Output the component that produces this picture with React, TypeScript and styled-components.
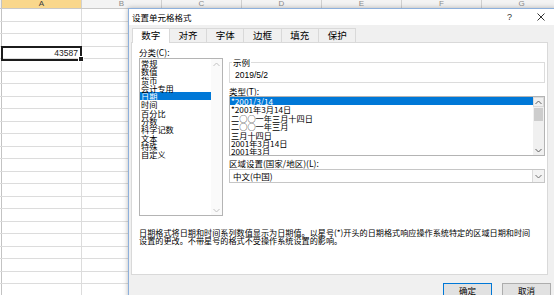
import React from "react";
import styled, { createGlobalStyle, css } from "styled-components";

const GlobalStyle = createGlobalStyle`
  html, body {
    margin: 0;
    padding: 0;
    width: 554px;
    height: 295px;
    overflow: hidden;
    background: #fff;
  }
  body {
    font-family: "Liberation Sans", Arial, sans-serif;
  }
  * { box-sizing: border-box; }
`;

const CJK = `"Noto Sans CJK SC", "Noto Sans", sans-serif`;

const columns = ["A", "B", "C", "D", "E", "F", "G"];
const categories = ["常规", "数值", "货币", "会计专用", "日期", "时间", "百分比", "分数", "科学记数", "文本", "特殊", "自定义"];
const dateTypes = ["*2001/3/14", "*2001年3月14日", "二○○一年三月十四日", "二○○一年三月", "三月十四日", "2001年3月14日", "2001年3月"];
const tabs = ["数字", "对齐", "字体", "边框", "填充", "保护"];

/* ---------- spreadsheet behind the dialog ---------- */

const Sheet = styled.div`
  position: relative;
  width: 554px;
  height: 295px;
  overflow: hidden;
  background: #fff;
`;

const HeaderRow = styled.div`
  display: flex;
  height: 9px;
  border-bottom: 1px solid #c8c8c8;
  background: #f3f3f3;
`;

const RowStub = styled.div`
  flex: none;
  width: 2px;
  border-right: 1px solid #c3c3c3;
`;

const ColHead = styled.div<{ $active?: boolean }>`
  flex: none;
  width: 80px;
  border-right: 1px solid #d0d0d0;
  background: ${(p) => (p.$active ? "#f9d78c" : "transparent")};
  color: ${(p) => (p.$active ? "#3c3c3c" : "#8c8c8c")};
  font-size: 8px;
  line-height: 8px;
  text-align: center;
`;

const Row = styled.div`
  display: flex;
  height: 12.5px;
  border-bottom: 1px solid #dcdcdc;
`;

const Cell = styled.div<{ $selected?: boolean }>`
  position: relative;
  flex: none;
  width: 80px;
  border-right: 1px solid #dcdcdc;
  display: flex;
  align-items: flex-end;
  justify-content: flex-end;
  padding: 0 3px 0 0;
  font-size: 8.5px;
  line-height: 10px;
  color: #222;
  ${(p) =>
    p.$selected &&
    css`
      &::after {
        content: "";
        position: absolute;
        left: -1px;
        top: -1px;
        right: -1px;
        bottom: -2.5px;
        border: 2px solid #1c1c1c;
      }
      &::before {
        content: "";
        position: absolute;
        right: -3px;
        bottom: -4px;
        width: 4px;
        height: 4px;
        background: #1c1c1c;
        border: 1px solid #fff;
        z-index: 1;
      }
    `}
`;

/* ---------- dialog ---------- */

const Dialog = styled.div`
  position: absolute;
  left: 128px;
  top: 8px;
  width: 429px;
  height: 300px;
  border: 1px solid #8db0dc;
  background: #f0f0f0;
  box-shadow: 0 0 5px rgba(0, 0, 0, 0.28);
  display: flex;
  flex-direction: column;
  font-family: ${CJK};
  color: #000;
`;

const TitleBar = styled.div`
  display: flex;
  align-items: center;
  height: 16px;
  background: #fff;
`;

const Title = styled.div`
  padding-left: 3px;
  font-size: 8.5px;
  line-height: 16px;
`;

const TitleButton = styled.div<{ $first?: boolean }>`
  width: 31px;
  height: 16px;
  display: flex;
  align-items: center;
  justify-content: center;
  margin-left: ${(p) => (p.$first ? "auto" : "0")};
  font-family: "Liberation Sans", Arial, sans-serif;
  font-size: 9px;
  color: #333;
`;

const Body = styled.div`
  flex: 1;
  display: flex;
  flex-direction: column;
  padding-top: 3px;
`;

const TabStrip = styled.div`
  display: flex;
  height: 14px;
  padding-left: 2.5px;
  position: relative;
  z-index: 1;
`;

const Tab = styled.div<{ $active?: boolean }>`
  width: 38.3px;
  height: ${(p) => (p.$active ? "15px" : "14px")};
  margin-left: -1px;
  border: 1px solid #d9d9d9;
  border-bottom: none;
  background: ${(p) => (p.$active ? "#fff" : "#f0f0f0")};
  font-size: 9.5px;
  line-height: 13px;
  text-align: center;
  &:first-child {
    margin-left: 0;
  }
`;

const Panel = styled.div`
  margin: 0 8px 0 2px;
  height: 233px;
  border: 1px solid #d9d9d9;
  background: #fff;
  padding: 4.5px 2px 0 7px;
  display: grid;
  grid-template-columns: 84px 316px;
  grid-template-rows: auto auto;
  column-gap: 6px;
  align-content: start;
  font-size: 8.5px;
`;

const Column = styled.div<{ $offset?: number }>`
  display: flex;
  flex-direction: column;
  margin-top: ${(p) => p.$offset ?? 0}px;
`;

const Label = styled.div<{ $gap?: number }>`
  line-height: 9px;
  height: 9px;
  margin-top: ${(p) => p.$gap ?? 0}px;
  white-space: nowrap;
`;

const ListBox = styled.div<{ $height: number; $gap?: number }>`
  display: flex;
  height: ${(p) => p.$height}px;
  margin-top: ${(p) => p.$gap ?? 0}px;
  border: 1px solid #b4b4b4;
  background: #fff;
`;

const Items = styled.div`
  flex: 1;
  overflow: hidden;
  font-size: 8.2px;
`;

const Item = styled.div<{ $selected?: boolean; $h: number }>`
  height: ${(p) => p.$h}px;
  line-height: ${(p) => p.$h}px;
  padding-left: 1px;
  white-space: nowrap;
  background: ${(p) => (p.$selected ? "#0078d7" : "transparent")};
  color: ${(p) => (p.$selected ? "#fff" : "#000")};
`;

const ScrollBar = styled.div<{ $track: string }>`
  flex: none;
  width: 11px;
  display: flex;
  flex-direction: column;
  background: ${(p) => p.$track};
`;

const ScrollButton = styled.div<{ $boxed?: boolean }>`
  height: 10px;
  display: flex;
  align-items: center;
  justify-content: center;
  border: 1px solid ${(p) => (p.$boxed ? "#dadada" : "transparent")};
`;

const Thumb = styled.div`
  height: 13px;
  margin: 1px 1px 0;
  background: #cdcdcd;
`;

const Spacer = styled.div`
  flex: 1;
`;

const Sample = styled.fieldset`
  margin: 0;
  padding: 0 5px 2.5px;
  border: 1px solid #dcdcdc;
  min-width: 0;
`;

const Legend = styled.legend`
  margin-left: -3px;
  padding: 0 1px;
  line-height: 9px;
  font-size: 8.5px;
`;

const SampleText = styled.div`
  margin-top: 3.5px;
  line-height: 9px;
  font-family: "Liberation Sans", Arial, sans-serif;
`;

const Select = styled.div`
  display: flex;
  height: 14px;
  margin-top: 1.5px;
  border: 1px solid #c6c6c6;
  background: #fff;
`;

const SelectValue = styled.div`
  flex: 1;
  padding-left: 3px;
  line-height: 12px;
`;

const SelectButton = styled.div`
  width: 12px;
  display: flex;
  align-items: center;
  justify-content: center;
  border-left: 1px solid #dadada;
  background: #f3f3f3;
`;

const Description = styled.div`
  grid-column: 1 / -1;
  margin-top: 13px;
  line-height: 8px;
  white-space: nowrap;
  font-size: 8.15px;
`;

const Footer = styled.div`
  display: flex;
  justify-content: flex-end;
  gap: 10px;
  padding: 8px 5px 0 0;
`;

const Button = styled.div<{ $primary?: boolean }>`
  width: 49px;
  height: 15px;
  border: 1px solid ${(p) => (p.$primary ? "#0078d7" : "#adadad")};
  background: #e1e1e1;
  font-size: 8.5px;
  line-height: 13px;
  text-align: center;
`;

function Chevron({ up, color }: { up?: boolean; color: string }) {
  return (
    <svg width="7" height="5" viewBox="0 0 7 5">
      <polyline
        points={up ? "0.5,4 3.5,1 6.5,4" : "0.5,1 3.5,4 6.5,1"}
        fill="none"
        stroke={color}
        strokeWidth="1"
      />
    </svg>
  );
}

function CloseIcon() {
  return (
    <svg width="8" height="8" viewBox="0 0 8 8">
      <path d="M0.5 0.5 L7.5 7.5 M7.5 0.5 L0.5 7.5" stroke="#333" strokeWidth="1" />
    </svg>
  );
}

export default function App() {
  const rows = Array.from({ length: 24 }, (_, i) => i);

  return (
    <>
      <GlobalStyle />
      <Sheet>
        <HeaderRow>
          <RowStub />
          {columns.map((c) => (
            <ColHead key={c} $active={c === "A"}>
              {c}
            </ColHead>
          ))}
        </HeaderRow>
        {rows.map((r) => (
          <Row key={r}>
            <RowStub />
            {columns.map((c) => (
              <Cell key={c} $selected={r === 3 && c === "A"}>
                {r === 3 && c === "A" ? "43587" : null}
              </Cell>
            ))}
          </Row>
        ))}

        <Dialog>
          <TitleBar>
            <Title>设置单元格格式</Title>
            <TitleButton $first>?</TitleButton>
            <TitleButton>
              <CloseIcon />
            </TitleButton>
          </TitleBar>

          <Body>
            <TabStrip>
              {tabs.map((t, i) => (
                <Tab key={t} $active={i === 0}>
                  {t}
                </Tab>
              ))}
            </TabStrip>

            <Panel>
              <Column>
                <Label>分类(C):</Label>
                <ListBox $height={158} $gap={1.5}>
                  <Items>
                    {categories.map((c) => (
                      <Item key={c} $h={8.3} $selected={c === "日期"}>
                        {c}
                      </Item>
                    ))}
                  </Items>
                  <ScrollBar $track="#fafafa">
                    <ScrollButton>
                      <Chevron up color="#c2c2c2" />
                    </ScrollButton>
                    <Spacer />
                    <ScrollButton>
                      <Chevron color="#c2c2c2" />
                    </ScrollButton>
                  </ScrollBar>
                </ListBox>
              </Column>

              <Column $offset={10.5}>
                <Sample>
                  <Legend>示例</Legend>
                  <SampleText>2019/5/2</SampleText>
                </Sample>
                <Label $gap={3.5}>类型(T):</Label>
                <ListBox $height={60} $gap={0.5}>
                  <Items>
                    {dateTypes.map((d, i) => (
                      <Item key={d} $h={8.4} $selected={i === 0}>
                        {d}
                      </Item>
                    ))}
                  </Items>
                  <ScrollBar $track="#f0f0f0">
                    <ScrollButton $boxed>
                      <Chevron up color="#606060" />
                    </ScrollButton>
                    <Thumb />
                    <Spacer />
                    <ScrollButton>
                      <Chevron color="#606060" />
                    </ScrollButton>
                  </ScrollBar>
                </ListBox>
                <Label $gap={2.5}>区域设置(国家/地区)(L):</Label>
                <Select>
                  <SelectValue>中文(中国)</SelectValue>
                  <SelectButton>
                    <Chevron color="#707070" />
                  </SelectButton>
                </Select>
              </Column>

              <Description>
                日期格式将日期和时间系列数值显示为日期值。以星号(*)开头的日期格式响应操作系统特定的区域日期和时间
                <br />
                设置的更改。不带星号的格式不受操作系统设置的影响。
              </Description>
            </Panel>

            <Footer>
              <Button $primary>确定</Button>
              <Button>取消</Button>
            </Footer>
          </Body>
        </Dialog>
      </Sheet>
    </>
  );
}
